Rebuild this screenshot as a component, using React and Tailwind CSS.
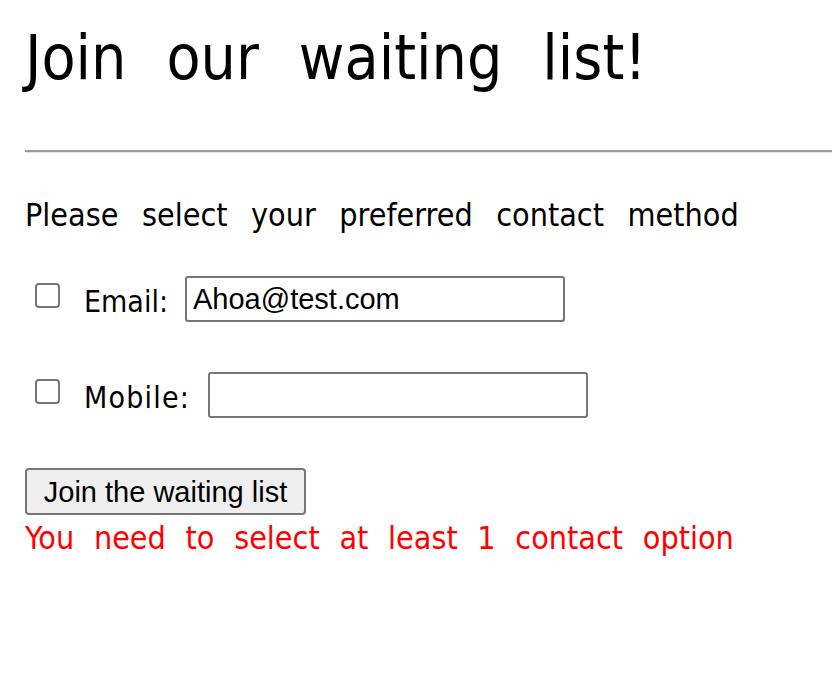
const headFont = "font-['DejaVu_Sans_Condensed','Liberation_Sans_Narrow','Liberation_Sans',sans-serif]";
const fieldFont = "font-['Liberation_Sans',Arial,sans-serif]";

const Checkbox = () => (
  <span className="inline-block w-[25px] h-[25px] shrink-0 rounded-[4px] border-2 border-[#767676] bg-white" />
);

const App = () => {
  return (
    <div className={`min-h-[691px] bg-white pl-[25px] pt-[18px] text-black ${headFont}`}>
      <h1 className="text-[62px] leading-[80px] [word-spacing:0.36em]">Join our waiting list!</h1>

      <div className="mt-[52px] h-[3px] border-t-2 border-b border-t-[#9b9b9b] border-b-[#e6e6e6]" />

      <p className="mt-[42px] text-[32px] leading-[40px] [word-spacing:0.45em]">
        Please select your preferred contact method
      </p>

      <div className="mt-[41px] flex items-center h-[46px]">
        <div className="ml-[10px] mr-[24px] mb-[8px] flex items-center"><Checkbox /></div>
        <label className="text-[30px] leading-[40px] mt-[6px]">Email:</label>
        <input
          type="text"
          defaultValue="Ahoa@test.com"
          className={`ml-[17px] w-[380px] h-[46px] rounded-[3px] border-2 border-[#767676] px-[6px] text-[29px] ${fieldFont} outline-none`}
        />
      </div>

      <div className="mt-[50px] flex items-center h-[46px]">
        <div className="ml-[10px] mr-[24px] mb-[8px] flex items-center"><Checkbox /></div>
        <label className="text-[30px] leading-[40px] mt-[6px] [letter-spacing:0.04em]">Mobile:</label>
        <input
          type="text"
          className={`ml-[18px] w-[380px] h-[46px] rounded-[3px] border-2 border-[#767676] px-[6px] text-[29px] ${fieldFont} outline-none`}
        />
      </div>

      <button className={`mt-[50px] h-[47px] w-[281px] rounded-[4px] border-2 border-[#767676] bg-[#efefef] text-[29px] leading-[40px] ${fieldFont}`}>
        Join the waiting list
      </button>

      <p className="text-[32px] leading-[46px] text-[#ff0000] [word-spacing:0.33em]">
        You need to select at least 1 contact option
      </p>
    </div>
  );
};

export default App;
